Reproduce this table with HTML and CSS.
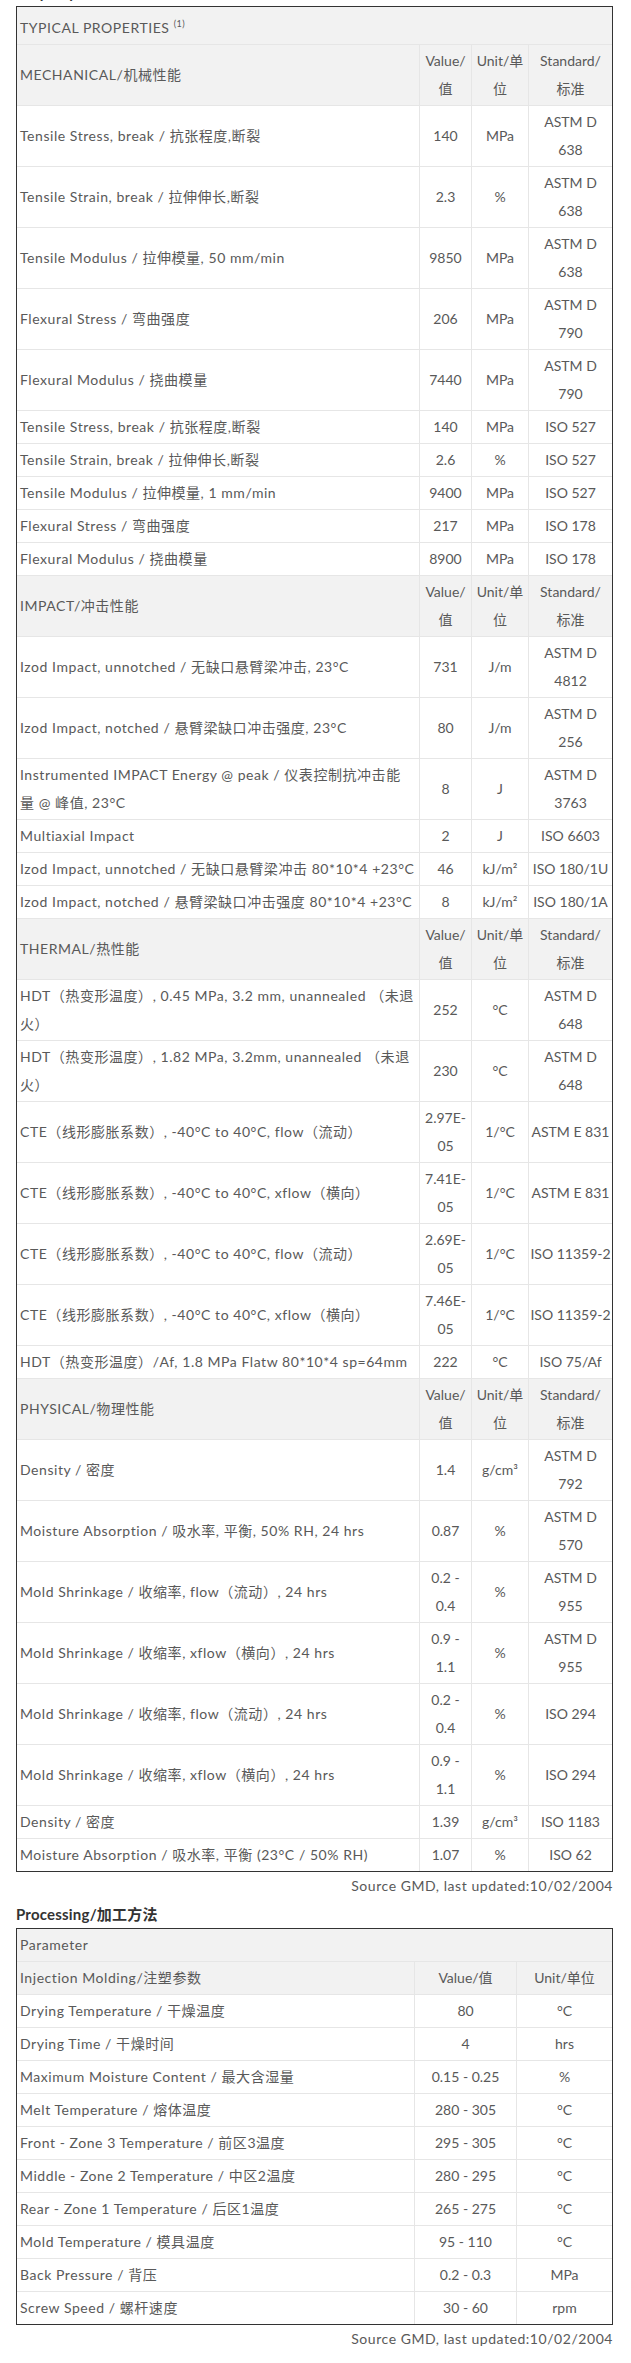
FILE: index.html
```html
<!DOCTYPE html>
<html lang="zh">
<head>
<meta charset="utf-8">
<title>Properties</title>
<link rel="stylesheet" href="styles.css">
</head>
<body>
<div class="page">
  <h3 class="section-title cut">Property/物性</h3>
  <table class="data props">
    <colgroup><col class="c-label"><col class="c-val"><col class="c-unit"><col class="c-std"></colgroup>
    <tr class="title"><td colspan="4">TYPICAL PROPERTIES <sup>(1)</sup></td></tr>
    <tr class="hdr"><td>MECHANICAL/机械性能</td><td>Value/<br>值</td><td>Unit/单<br>位</td><td>Standard/<br>标准</td></tr>
    <tr><td>Tensile Stress, break / 抗张程度,断裂</td><td>140</td><td>MPa</td><td>ASTM D<br>638</td></tr>
    <tr><td>Tensile Strain, break / 拉伸伸长,断裂</td><td>2.3</td><td>%</td><td>ASTM D<br>638</td></tr>
    <tr><td>Tensile Modulus / 拉伸模量, 50 mm/min</td><td>9850</td><td>MPa</td><td>ASTM D<br>638</td></tr>
    <tr><td>Flexural Stress / 弯曲强度</td><td>206</td><td>MPa</td><td>ASTM D<br>790</td></tr>
    <tr><td>Flexural Modulus / 挠曲模量</td><td>7440</td><td>MPa</td><td>ASTM D<br>790</td></tr>
    <tr><td>Tensile Stress, break / 抗张程度,断裂</td><td>140</td><td>MPa</td><td>ISO 527</td></tr>
    <tr><td>Tensile Strain, break / 拉伸伸长,断裂</td><td>2.6</td><td>%</td><td>ISO 527</td></tr>
    <tr><td>Tensile Modulus / 拉伸模量, 1 mm/min</td><td>9400</td><td>MPa</td><td>ISO 527</td></tr>
    <tr><td>Flexural Stress / 弯曲强度</td><td>217</td><td>MPa</td><td>ISO 178</td></tr>
    <tr><td>Flexural Modulus / 挠曲模量</td><td>8900</td><td>MPa</td><td>ISO 178</td></tr>
    <tr class="hdr"><td>IMPACT/冲击性能</td><td>Value/<br>值</td><td>Unit/单<br>位</td><td>Standard/<br>标准</td></tr>
    <tr><td>Izod Impact, unnotched / 无缺口悬臂梁冲击, 23°C</td><td>731</td><td>J/m</td><td>ASTM D<br>4812</td></tr>
    <tr><td>Izod Impact, notched / 悬臂梁缺口冲击强度, 23°C</td><td>80</td><td>J/m</td><td>ASTM D<br>256</td></tr>
    <tr><td>Instrumented IMPACT Energy @ peak / 仪表控制抗冲击能<br>量 @ 峰值, 23°C</td><td>8</td><td>J</td><td>ASTM D<br>3763</td></tr>
    <tr><td>Multiaxial Impact</td><td>2</td><td>J</td><td>ISO 6603</td></tr>
    <tr><td>Izod Impact, unnotched / 无缺口悬臂梁冲击 80*10*4 +23°C</td><td>46</td><td>kJ/m²</td><td>ISO 180/1U</td></tr>
    <tr><td>Izod Impact, notched / 悬臂梁缺口冲击强度 80*10*4 +23°C</td><td>8</td><td>kJ/m²</td><td>ISO 180/1A</td></tr>
    <tr class="hdr"><td>THERMAL/热性能</td><td>Value/<br>值</td><td>Unit/单<br>位</td><td>Standard/<br>标准</td></tr>
    <tr><td>HDT（热变形温度）, 0.45 MPa, 3.2 mm, unannealed （未退<br>火）</td><td>252</td><td>°C</td><td>ASTM D<br>648</td></tr>
    <tr><td>HDT（热变形温度）, 1.82 MPa, 3.2mm, unannealed （未退<br>火）</td><td>230</td><td>°C</td><td>ASTM D<br>648</td></tr>
    <tr><td>CTE（线形膨胀系数）, -40°C to 40°C, flow（流动）</td><td>2.97E-<br>05</td><td>1/°C</td><td>ASTM E 831</td></tr>
    <tr><td>CTE（线形膨胀系数）, -40°C to 40°C, xflow（横向）</td><td>7.41E-<br>05</td><td>1/°C</td><td>ASTM E 831</td></tr>
    <tr><td>CTE（线形膨胀系数）, -40°C to 40°C, flow（流动）</td><td>2.69E-<br>05</td><td>1/°C</td><td>ISO 11359-2</td></tr>
    <tr><td>CTE（线形膨胀系数）, -40°C to 40°C, xflow（横向）</td><td>7.46E-<br>05</td><td>1/°C</td><td>ISO 11359-2</td></tr>
    <tr><td>HDT（热变形温度）/Af, 1.8 MPa Flatw 80*10*4 sp=64mm</td><td>222</td><td>°C</td><td>ISO 75/Af</td></tr>
    <tr class="hdr"><td>PHYSICAL/物理性能</td><td>Value/<br>值</td><td>Unit/单<br>位</td><td>Standard/<br>标准</td></tr>
    <tr><td>Density / 密度</td><td>1.4</td><td>g/cm³</td><td>ASTM D<br>792</td></tr>
    <tr><td>Moisture Absorption / 吸水率, 平衡, 50% RH, 24 hrs</td><td>0.87</td><td>%</td><td>ASTM D<br>570</td></tr>
    <tr><td>Mold Shrinkage / 收缩率, flow（流动）, 24 hrs</td><td>0.2 -<br>0.4</td><td>%</td><td>ASTM D<br>955</td></tr>
    <tr><td>Mold Shrinkage / 收缩率, xflow（横向）, 24 hrs</td><td>0.9 -<br>1.1</td><td>%</td><td>ASTM D<br>955</td></tr>
    <tr><td>Mold Shrinkage / 收缩率, flow（流动）, 24 hrs</td><td>0.2 -<br>0.4</td><td>%</td><td>ISO 294</td></tr>
    <tr><td>Mold Shrinkage / 收缩率, xflow（横向）, 24 hrs</td><td>0.9 -<br>1.1</td><td>%</td><td>ISO 294</td></tr>
    <tr><td>Density / 密度</td><td>1.39</td><td>g/cm³</td><td>ISO 1183</td></tr>
    <tr><td>Moisture Absorption / 吸水率, 平衡 (23°C / 50% RH)</td><td>1.07</td><td>%</td><td>ISO 62</td></tr>
  </table>
  <p class="source">Source GMD, last updated:10/02/2004</p>

  <h3 class="section-title">Processing/加工方法</h3>
  <table class="data proc">
    <colgroup><col class="p-label"><col class="p-val"><col class="p-unit"></colgroup>
    <tr class="hdr"><td colspan="3">Parameter</td></tr>
    <tr class="hdr"><td>Injection Molding/注塑参数</td><td>Value/值</td><td>Unit/单位</td></tr>
    <tr><td>Drying Temperature / 干燥温度</td><td>80</td><td>°C</td></tr>
    <tr><td>Drying Time / 干燥时间</td><td>4</td><td>hrs</td></tr>
    <tr><td>Maximum Moisture Content / 最大含湿量</td><td>0.15 - 0.25</td><td>%</td></tr>
    <tr><td>Melt Temperature / 熔体温度</td><td>280 - 305</td><td>°C</td></tr>
    <tr><td>Front - Zone 3 Temperature / 前区3温度</td><td>295 - 305</td><td>°C</td></tr>
    <tr><td>Middle - Zone 2 Temperature / 中区2温度</td><td>280 - 295</td><td>°C</td></tr>
    <tr><td>Rear - Zone 1 Temperature / 后区1温度</td><td>265 - 275</td><td>°C</td></tr>
    <tr><td>Mold Temperature / 模具温度</td><td>95 - 110</td><td>°C</td></tr>
    <tr><td>Back Pressure / 背压</td><td>0.2 - 0.3</td><td>MPa</td></tr>
    <tr><td>Screw Speed / 螺杆速度</td><td>30 - 60</td><td>rpm</td></tr>
  </table>
  <p class="source">Source GMD, last updated:10/02/2004</p>
</div>
</body>
</html>
```

FILE: styles.css
```css
html, body {
  margin: 0;
  padding: 0;
  background: #fff;
}

body {
  font-family: Lato, "Noto Sans CJK SC", sans-serif;
  font-size: 14px;
  line-height: 28px;
  color: #595959;
  letter-spacing: 0.55px;
}

.page {
  width: 597px;
  margin: -22px 0 0 16px;
}

.section-title {
  margin: 0;
  font-size: 15px;
  line-height: 28px;
  font-weight: 700;
  color: #333;
  letter-spacing: 0.2px;
}

.data {
  width: 597px;
  table-layout: fixed;
  border-collapse: separate;
  border-spacing: 0;
  border: 1px solid #333;
}

.c-label { width: 402px; }
.c-val { width: 52px; }
.c-unit { width: 57px; }
.c-std { width: 84px; }

.p-label { width: 397px; }
.p-val { width: 102px; }
.p-unit { width: 96px; }

.data td {
  padding: 2px 1px 2px 3px;
  vertical-align: middle;
  text-align: center;
  white-space: nowrap;
}

.data td + td {
  padding: 2px 0;
  letter-spacing: 0;
}

.data td:first-child {
  text-align: left;
}

.data tr + tr td {
  border-top: 1px solid #e6e6e6;
}

.data td + td {
  border-left: 1px solid #e6e6e6;
}

.data .hdr td,
.data .title td {
  background: #f2f2f2;
}

.data .title td {
  padding-top: 7px;
  padding-bottom: 2px;
}

.data sup {
  font-size: 9px;
  line-height: 0;
  vertical-align: 6px;
}

.source {
  margin: 0;
  text-align: right;
  line-height: 28px;
}
```
